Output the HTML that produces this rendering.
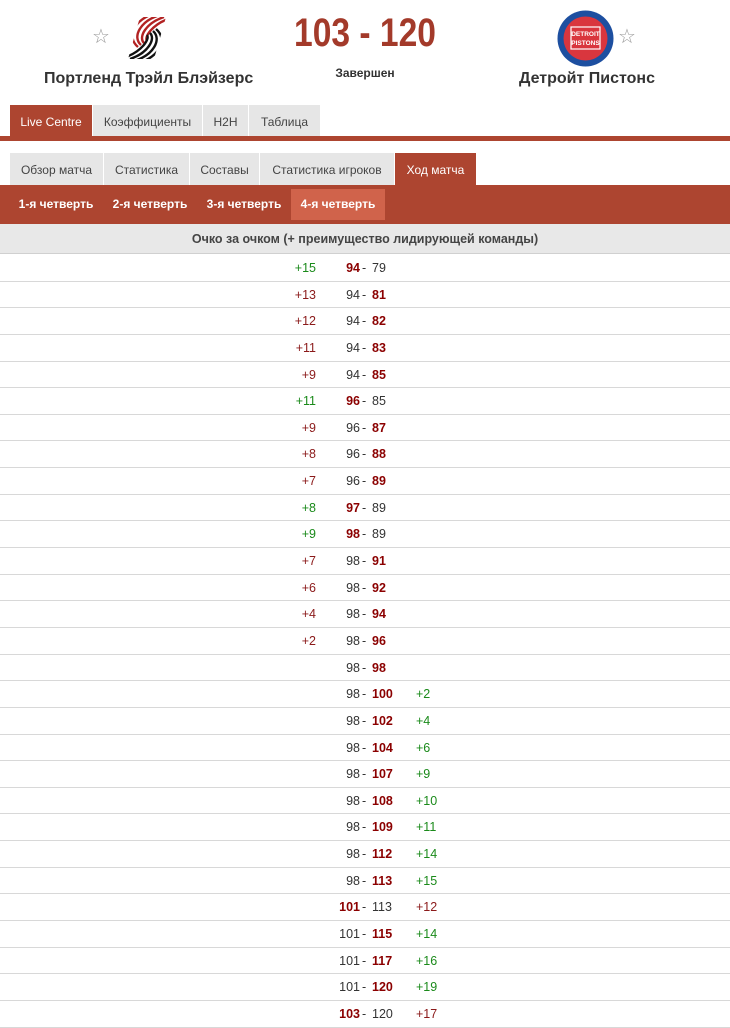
<!DOCTYPE html>
<html><head><meta charset="utf-8"><style>
*{margin:0;padding:0;box-sizing:border-box}
body{width:730px;height:1025px;background:#fff;font-family:"Liberation Sans",sans-serif;font-size:12px;color:#333;position:relative;overflow:hidden}
.abs{position:absolute}
.name{font-family:"Liberation Sans",sans-serif;font-weight:bold;font-size:16px;color:#333;top:70px}
.star{font-size:20px;color:#999;top:24px}
.score{left:0;width:730px;text-align:center;top:11px;font-family:"Liberation Sans",sans-serif;font-weight:bold;font-size:40px;color:#a33a2a;transform:scaleX(0.84)}
.tab{position:absolute;background:#e6e6e6;color:#444;text-align:center;font-size:12px}
.t1{top:105px;height:32px;line-height:34px}
.t2{top:153px;height:32px;line-height:34px}
.act{background:#ad4530;color:#fff}
.q{position:absolute;top:189px;height:31px;line-height:31px;color:#fff;font-size:12px;font-weight:bold;text-align:center}
.row{position:absolute;left:0;width:730px;height:26.64px;border-bottom:1px solid #d8d8d8;font-size:12.5px}
.row span{position:absolute;top:6px}
.d{right:414px;text-align:right}
.a{right:370px;text-align:right}
.m{left:362px}
.b{left:372px}
.r{left:416px}
.bo{font-weight:bold;color:#8b0000}
.g{color:#1a8a1a}.rd{color:#8b1a1a}
</style></head><body>
<div class="abs star" style="left:92px">☆</div>
<svg class="abs" style="left:126px;top:17px" width="42" height="42" viewBox="0 0 42 42">
<defs><clipPath id="c"><polygon points="14,0 40,0 28,42 2,42"/></clipPath></defs>
<g clip-path="url(#c)" fill="none" stroke-width="2.4">
<g stroke="#b22222"><path d="M30,-4 C8,2 0,20 12,30"/><path d="M34,-2 C14,4 6,20 15,28"/><path d="M38,0 C20,6 12,20 18,26"/><path d="M42,2 C26,8 18,20 21,24"/></g>
<g stroke="#111"><path d="M12,46 C34,40 42,22 30,12"/><path d="M8,44 C28,38 36,22 27,14"/><path d="M4,42 C22,36 30,22 24,16"/><path d="M0,40 C16,34 24,22 21,18"/></g>
</g></svg>
<div class="abs name" style="left:44px">Портленд Трэйл Блэйзерс</div>
<div class="abs score">103 - 120</div>
<div class="abs" style="left:0;width:730px;text-align:center;top:66px;font-family:'Liberation Sans',sans-serif;font-weight:bold;font-size:12px;color:#333">Завершен</div>
<svg class="abs" style="left:557px;top:10px" width="57" height="57" viewBox="0 0 57 57"><circle cx="28.5" cy="28.5" r="28" fill="#1d4fa0"/><circle cx="28.5" cy="28.5" r="22" fill="#d9363e"/><rect x="14" y="17" width="29" height="22" fill="none" stroke="#fff" stroke-width="1.2"/><text x="28.5" y="26" font-size="6.5" font-family="Liberation Sans" font-weight="bold" fill="#fff" text-anchor="middle">DETROIT</text><text x="28.5" y="35" font-size="6.5" font-family="Liberation Sans" font-weight="bold" fill="#fff" text-anchor="middle">PISTONS</text></svg>
<div class="abs star" style="left:618px">☆</div>
<div class="abs name" style="left:519px">Детройт Пистонс</div>

<div class="tab t1 act" style="left:10px;width:82px">Live Centre</div>
<div class="tab t1" style="left:93px;width:109px">Коэффициенты</div>
<div class="tab t1" style="left:203px;width:45px">H2H</div>
<div class="tab t1" style="left:249px;width:71px">Таблица</div>
<div class="abs" style="left:0;top:136px;width:730px;height:5px;background:#ad4530"></div>

<div class="tab t2" style="left:10px;width:93px">Обзор матча</div>
<div class="tab t2" style="left:104px;width:85px">Статистика</div>
<div class="tab t2" style="left:190px;width:69px">Составы</div>
<div class="tab t2" style="left:260px;width:134px">Статистика игроков</div>
<div class="tab t2 act" style="left:395px;width:81px">Ход матча</div>
<div class="abs" style="left:0;top:185px;width:730px;height:39px;background:#ad4530"></div>
<div class="q" style="left:10px;width:92px">1-я четверть</div>
<div class="q" style="left:103px;width:94px">2-я четверть</div>
<div class="q" style="left:197px;width:94px">3-я четверть</div>
<div class="q" style="left:291px;width:94px;background:#d0634b">4-я четверть</div>
<div class="abs" style="left:0;top:224px;width:730px;height:30px;background:#e8e8e8;border-bottom:1px solid #d0d0d0;text-align:center;line-height:31px;font-weight:bold;font-size:12.5px;color:#444">Очко за очком (+ преимущество лидирующей команды)</div>
<div id="rows"></div>
<script>
var d=[[94,79,1],[94,81,2],[94,82,2],[94,83,2],[94,85,2],[96,85,1],[96,87,2],[96,88,2],[96,89,2],[97,89,1],[98,89,1],[98,91,2],[98,92,2],[98,94,2],[98,96,2],[98,98,2],[98,100,2],[98,102,2],[98,104,2],[98,107,2],[98,108,2],[98,109,2],[98,112,2],[98,113,2],[101,113,1],[101,115,2],[101,117,2],[101,120,2],[103,120,1]];
var h='';
for(var i=0;i<d.length;i++){var a=d[i][0],b=d[i][1],w=d[i][2],t=255+i*26.64;
var diff=a-b,s='';
if(diff>0)s='<span class="d '+(w==1?'g':'rd')+'">+'+diff+'</span>';
if(diff<0)s='<span class="r '+(w==2?'g':'rd')+'">+'+(-diff)+'</span>';
h+='<div class="row" style="top:'+t+'px">'+s+'<span class="a'+(w==1?' bo':'')+'">'+a+'</span><span class="m">-</span><span class="b'+(w==2?' bo':'')+'">'+b+'</span></div>';}
document.getElementById('rows').innerHTML=h;
</script>
</body></html>
